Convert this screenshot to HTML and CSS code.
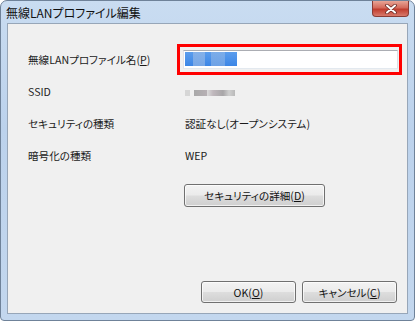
FILE: index.html
```html
<!DOCTYPE html>
<html lang="ja">
<head>
    <meta charset="UTF-8">
    <title>無線LANプロファイル編集</title>
    <link rel="stylesheet" href="styles.css">
</head>
<body>
    <div class="window">
        <div class="titlebar">
            <span class="title">無線LANプロファイル編集</span>
            <span class="close">
                <svg width="14" height="10" viewBox="0 0 14 10">
                    <path d="M3 1.5 L11 8.5 M11 1.5 L3 8.5" stroke="#6b2a24" stroke-width="3.6" stroke-linecap="round"/>
                    <path d="M3 1.5 L11 8.5 M11 1.5 L3 8.5" stroke="#fff" stroke-width="2" stroke-linecap="round"/>
                </svg>
            </span>
        </div>
        <div class="client">
            <div class="fields">
                <span class="label">無線LANプロファイル名(<u>P</u>)</span>
                <div class="highlight">
                    <div class="input"><span class="selected"></span></div>
                </div>

                <span class="label">SSID</span>
                <span class="value"><span class="blurred"></span></span>

                <span class="label">セキュリティの種類</span>
                <span class="value">認証なし(オープンシステム)</span>

                <span class="label">暗号化の種類</span>
                <span class="value">WEP</span>
            </div>
            <div class="detail-row">
                <button class="btn btn-detail">セキュリティの詳細(<u>D</u>)</button>
            </div>
            <div class="actions">
                <button class="btn">OK(<u>O</u>)</button>
                <button class="btn">キャンセル(<u>C</u>)</button>
            </div>
        </div>
    </div>
</body>
</html>
```

FILE: styles.css
```css
body {
    margin: 0;
    background-color: #fff;
    font-family: "Noto Sans CJK JP", "Noto Sans", sans-serif;
    font-size: 10.6px;
    font-feature-settings: "palt";
    color: #1a1a1a;
}

.window {
    width: 415px;
    height: 321px;
    box-sizing: border-box;
    padding: 0 6px 6px 6px;
    display: flex;
    flex-direction: column;
    background: linear-gradient(to bottom, #c9dcf1, #bcd2ec 40%, #c3d7ee);
    border: 1px solid #6f8299;
    border-radius: 7px 7px 4px 4px;
}

.titlebar {
    height: 22px;
    display: flex;
    justify-content: space-between;
    align-items: flex-start;
}

.title {
    font-size: 12px;
    line-height: 24px;
    color: #111;
    margin-left: -1px;
}

.close {
    width: 37px;
    height: 16px;
    box-sizing: border-box;
    display: flex;
    align-items: center;
    justify-content: center;
    background: linear-gradient(to bottom, #e8a596, #d46a5b 45%, #c03d2e 55%, #d8796b);
    border: 1px solid #8a3c34;
    border-top: none;
    border-radius: 0 0 4px 4px;
    margin-right: -1px;
}

.client {
    flex: 1;
    display: flex;
    flex-direction: column;
    background-color: #f0f0f0;
    border: 1px solid #97a6b8;
}

.fields {
    display: grid;
    grid-template-columns: 149px 1fr;
    grid-template-rows: 31px 32px 33px 31px;
    align-items: center;
    padding: 20px 5px 0 20px;
}

.highlight {
    height: 31px;
    box-sizing: border-box;
    border: 3px solid #ff0000;
    padding: 3px 1px 3px 3px;
}

.input {
    height: 19px;
    box-sizing: border-box;
    background-color: #fff;
    border: 1px solid #abadb3;
    border-color: #abadb3 #dbdfe6 #e3e9ef #e2e3ea;
    padding: 1px;
    display: flex;
}

.selected {
    width: 52px;
    height: 14px;
    background:
        linear-gradient(90deg, transparent 8px, rgba(160, 190, 230, 0.6) 8px, rgba(160, 190, 230, 0.6) 20px, transparent 20px, transparent 26px, rgba(150, 185, 230, 0.55) 26px, rgba(150, 185, 230, 0.55) 40px, transparent 40px),
        linear-gradient(to bottom, #5b9ded, #3c86e6);
}

.value {
    padding-left: 8px;
}

.blurred {
    display: inline-block;
    width: 50px;
    height: 6px;
    vertical-align: middle;
    background: linear-gradient(90deg, #d6d6d6 0, #d6d6d6 5px, #f0f0f0 5px, #f0f0f0 9px, #a9a9a9 9px, #b7b0b4 22px, #dcdcdc 22px, #c0b8bd 28px, #a8a6a8 38px, #cfcfcf 44px, #b9b9b9 50px);
}

.detail-row {
    padding: 13px 0 0 176px;
}

.btn {
    font-family: inherit;
    font-size: 10.6px;
    font-feature-settings: "palt";
    color: #111;
    height: 22px;
    box-sizing: border-box;
    padding: 0;
    border: 1px solid #707070;
    border-radius: 3px;
    background: linear-gradient(to bottom, #f3f3f3, #ebebeb 48%, #dddddd 52%, #cfcfcf);
    box-shadow: inset 0 0 0 1px rgba(255, 255, 255, 0.7);
}

.btn-detail {
    width: 141px;
    height: 23px;
}

.actions {
    margin-top: auto;
    display: flex;
    justify-content: flex-end;
    gap: 6px;
    padding: 0 10px 10px 0;
}

.actions .btn {
    width: 95px;
}
```
